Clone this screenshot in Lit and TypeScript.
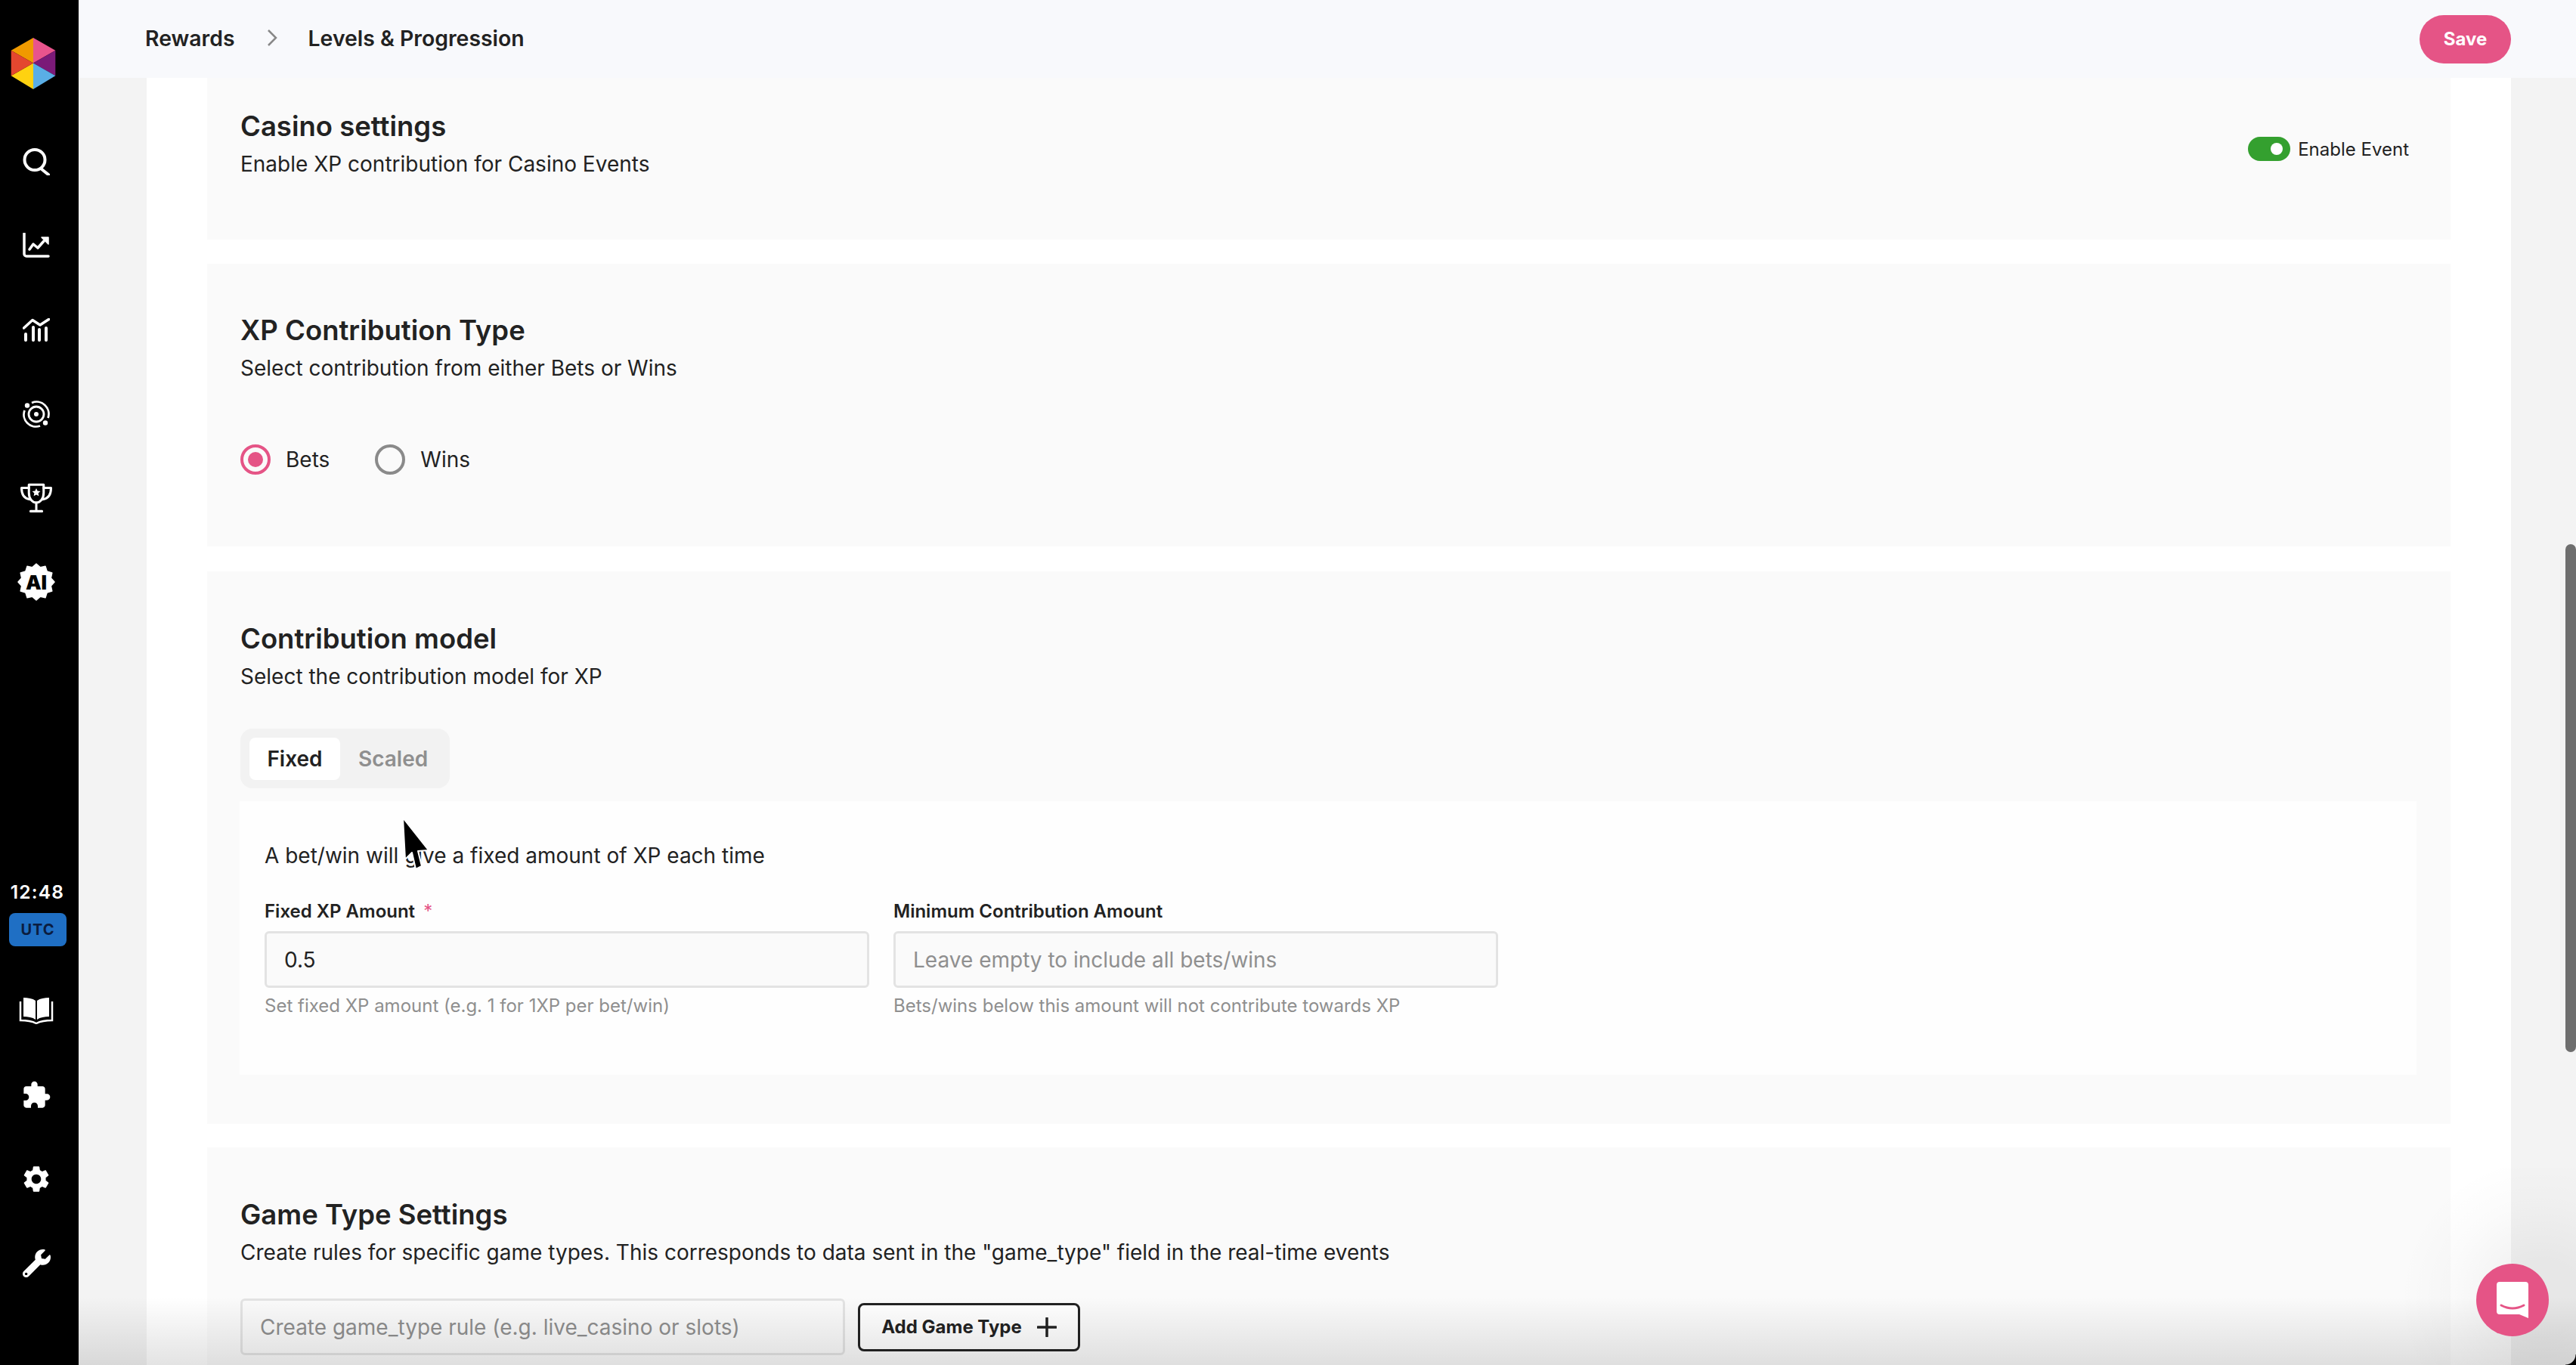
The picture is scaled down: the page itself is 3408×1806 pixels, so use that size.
import { LitElement, html, css, svg } from "lit";
import { customElement } from "lit/decorators.js";

const badge = (() => {
  const pts: string[] = [];
  const n = 12;
  for (let i = 0; i < n * 2; i++) {
    const r = i % 2 === 0 ? 24 : 20;
    const a = (Math.PI * i) / n - Math.PI / 2;
    pts.push(`${(25 + r * Math.cos(a)).toFixed(2)},${(25 + r * Math.sin(a)).toFixed(2)}`);
  }
  return pts.join(" ");
})();

const logo = svg`<svg width="60" height="68" viewBox="0 0 56 65">
  <polygon points="28,32 28,0 0,16" fill="#f09a00"/>
  <polygon points="28,32 28,0 56,16" fill="#e8548d"/>
  <polygon points="28,32 56,16 56,48" fill="#7b1a78"/>
  <polygon points="28,32 56,48 28,65" fill="#5aaee6"/>
  <polygon points="28,32 28,65 0,48" fill="#ffd210"/>
  <polygon points="28,32 0,48 0,16" fill="#e4472f"/>
</svg>`;

const icons = {
  search: svg`<svg width="36" height="36" viewBox="0 0 36 36" fill="none" stroke="#fff" stroke-width="4" stroke-linecap="round"><circle cx="16" cy="15.5" r="13.5"/><path d="M24 27l10 8"/></svg>`,
  area: svg`<svg width="36" height="33" viewBox="0 0 36 33" fill="none" stroke="#fff" stroke-linecap="round" stroke-linejoin="round"><path d="M2 1V28a3 3 0 0 0 3 3H34" stroke-width="3.5"/><path d="M9 22l5-7 6 5 8-9" stroke-width="3.5"/><path d="M25 6h9v9z" fill="#fff" stroke-width="1.5"/></svg>`,
  line: svg`<svg width="36" height="31" viewBox="0 0 36 31" fill="none" stroke="#fff" stroke-linecap="round" stroke-linejoin="round"><path d="M1.5 13L13 2.500l10 6.500L34.500 1.500" stroke-width="3.500"/><path d="M4 21V29M14 12V29M22 15V29M31 13V29" stroke-width="4"/></svg>`,
  target: svg`<svg width="36" height="36" viewBox="0 0 36 36" fill="none" stroke="#fff"><path d="M12 3A16 16 0 0 1 33.500 23M23 33.500A16 16 0 0 1 2.500 13" stroke-width="2.800"/><circle cx="18" cy="18" r="10" stroke-width="2.800"/><circle cx="18" cy="18" r="3" fill="#fff" stroke="none"/><circle cx="6" cy="6.500" r="3.200" fill="#fff" stroke="none"/><circle cx="30" cy="29.500" r="3.200" fill="#fff" stroke="none"/></svg>`,
  trophy: svg`<svg width="44" height="39" viewBox="0 0 40 36" fill="none" stroke="#fff" stroke-width="2.800" stroke-linecap="round" stroke-linejoin="round"><path d="M11 2H29V12C29 19 25 24 20 24S11 19 11 12z"/><path d="M11 6H2C2 14 5 19 12 20M29 6H38C38 14 35 19 28 20"/><path d="M20 24V33M13 34.500H27"/><path d="M20 6.500l1.500 3.200 3.500.4-2.600 2.400.7 3.500-3.100-1.800-3.100 1.800.7-3.500-2.600-2.400 3.500-.4z" fill="#fff" stroke="none"/></svg>`,
  ai: svg`<svg width="50" height="50" viewBox="0 0 50 50"><polygon points="${badge}" fill="#fff" stroke="#fff" stroke-width="1.500" stroke-linejoin="round"/><text x="25" y="34.500" text-anchor="middle" font-family="Inter" font-weight="900" font-size="26" fill="#000">AI</text></svg>`,
  book: svg`<svg width="46" height="36" viewBox="0 0 46 36"><path d="M6 1C12 1 18 2 22 5V30C18 27 12 26 6 26z" fill="#fff"/><path d="M24 5C28 2 34 1 40 1V26C34 26 28 27 24 30z" fill="#fff"/><path d="M2 6V31C10 31 17 32 23 35C29 32 36 31 44 31V6" fill="none" stroke="#fff" stroke-width="2.500"/></svg>`,
  puzzle: svg`<svg width="40" height="40" viewBox="0 0 24 24" fill="#fff"><path d="M20.500 11H19V7c0-1.100-.9-2-2-2h-4V3.500C13 2.120 11.880 1 10.500 1S8 2.120 8 3.500V5H4c-1.100 0-1.990.9-1.990 2v3.800H3.500c1.490 0 2.700 1.210 2.700 2.700s-1.210 2.700-2.700 2.700H2V20c0 1.100.9 2 2 2h3.800v-1.500c0-1.490 1.210-2.700 2.700-2.700 1.490 0 2.700 1.210 2.700 2.700V22H17c1.100 0 2-.9 2-2v-4h1.500c1.380 0 2.500-1.120 2.500-2.500S21.880 11 20.500 11z"/></svg>`,
  gear: svg`<svg width="42" height="42" viewBox="0 0 24 24" fill="#fff"><path d="M19.140 12.940c.04-.3.06-.61.06-.94 0-.32-.02-.64-.07-.94l2.030-1.580c.18-.14.23-.41.12-.61l-1.920-3.320c-.12-.22-.37-.29-.59-.22l-2.390.96c-.5-.38-1.030-.7-1.620-.94l-.36-2.540c-.04-.24-.24-.41-.48-.41h-3.840c-.24 0-.43.17-.47.41l-.36 2.540c-.59.24-1.130.57-1.620.94l-2.390-.96c-.22-.08-.47 0-.59.22L2.740 8.870c-.12.21-.08.47.12.61l2.030 1.580c-.05.3-.09.63-.09.94s.02.64.07.94l-2.030 1.580c-.18.14-.23.41-.12.61l1.920 3.320c.12.22.37.29.59.22l2.390-.96c.5.38 1.030.7 1.620.94l.36 2.54c.05.24.24.41.48.41h3.840c.24 0 .44-.17.47-.41l.36-2.540c.59-.24 1.130-.56 1.620-.94l2.390.96c.22.08.47 0 .59-.22l1.920-3.320c.12-.22.07-.47-.12-.61l-2.010-1.580zM12 15.600c-1.980 0-3.600-1.620-3.600-3.600s1.620-3.600 3.600-3.600 3.600 1.620 3.600 3.600-1.620 3.600-3.600 3.600z"/></svg>`,
  wrench: svg`<svg width="37" height="37" viewBox="0 0 512 512" fill="#fff"><path d="M507.730 109.100c-2.240-9.030-13.540-12.090-20.120-5.510l-74.360 74.360-67.880-11.310-11.310-67.880 74.360-74.360c6.620-6.620 3.430-17.900-5.660-20.160-47.380-11.740-99.550.91-136.580 37.930-39.640 39.640-50.550 97.100-34.050 147.200L18.740 402.760c-24.990 24.990-24.990 65.510 0 90.500 24.990 24.990 65.510 24.990 90.500 0l213.210-213.210c50.120 16.710 107.470 5.680 147.370-34.220 37.070-37.070 49.700-89.320 37.910-136.730zM64 472c-13.250 0-24-10.750-24-24 0-13.260 10.750-24 24-24s24 10.740 24 24c0 13.250-10.750 24-24 24z"/></svg>`,
};

@customElement("app-root")
export class AppRoot extends LitElement {
  static styles = css`
    :host {
      display: block;
      position: relative;
      width: 3408px;
      height: 1806px;
      overflow: hidden;
      font-family: Inter, "Noto Sans", sans-serif;
      color: #222;
      background: #f3f3f3;
    }
    * { box-sizing: border-box; }
    .app { display: grid; grid-template-columns: 104px 1fr; height: 100%; }

    .rail {
      background: #000;
      display: flex;
      flex-direction: column;
      align-items: center;
      padding: 50px 8px 0 0;
      color: #fff;
    }
    .logo { display: flex; margin: 0 9px 0 0; height: 68px; }
    .logo-gap { height: 40px; flex: none; }
    .slot { height: 111.300px; width: 100%; flex: none; display: flex; align-items: center; justify-content: center; }
    .clock { margin: 338px 0 0 3px; font-size: 24.500px; line-height: 32px; font-weight: 600; letter-spacing: 1.200px; }
    .tz {
      margin: 12px 0 30px 4px;
      width: 76px;
      height: 44px;
      border-radius: 8px;
      background: #1f6fc4;
      color: #0b1d40;
      font-size: 20px;
      font-weight: 700;
      letter-spacing: 1px;
      display: flex;
      align-items: center;
      justify-content: center;
    }

    .main { display: flex; flex-direction: column; min-width: 0; }
    .top {
      height: 103px;
      flex: none;
      background: #f8f9fc;
      display: flex;
      align-items: center;
      padding: 0 86px 3px 88px;
      font-size: 28.400px;
      font-weight: 600;
    }
    .top svg { margin: 0 41px 0 42px; }
    .save {
      margin: 3px 0 0 auto;
      width: 121px;
      height: 64px;
      border: 0;
      border-radius: 32px;
      background: #e55486;
      color: #fff;
      font: 700 24px Inter, sans-serif;
    }

    .scroll { flex: 1; padding: 0 86px 0 90px; min-height: 0; }
    .panel { background: #fff; height: 100%; padding: 0 80px; }
    .card { background: #fafafa; padding-left: 44px; padding-right: 45px; margin-bottom: 31px; }
    .casino { height: 214px; padding-top: 43px; position: relative; margin-bottom: 32px; display: flex; justify-content: space-between; }
    .xp { height: 374px; padding-top: 67px; margin-bottom: 33px; }
    .model { height: 731px; padding-top: 68px; }
    .game { padding-top: 68px; height: 300px; }

    h2 { margin: 0 0 9px; font-size: 36.500px; line-height: 42px; font-weight: 600; color: #222; }
    .desc { margin: 0; font-size: 28px; line-height: 40px; font-weight: 400; color: #222; }

    .toggle-wrap { display: flex; align-items: center; gap: 10px; font-size: 24px; height: 32px; margin: 35px 10px 0 0; }
    .toggle {
      width: 56px;
      height: 32px;
      border-radius: 16px;
      background: #34a02f;
      display: flex;
      align-items: center;
      justify-content: flex-end;
      padding-right: 10px;
    }
    .toggle i { width: 16px; height: 16px; border-radius: 50%; background: #fff; }

    .radios { display: flex; margin: 81px 0 0; gap: 60px; font-size: 28px; }
    .radio { display: flex; align-items: center; gap: 20px; height: 40px; }
    .dot { width: 40px; height: 40px; border-radius: 50%; border: 4.500px solid #8a8a8a; display: flex; align-items: center; justify-content: center; }
    .dot.on { border-color: #e55486; }
    .dot.on i { width: 20px; height: 20px; border-radius: 50%; background: #e55486; }

    .tabs {
      margin: 49px 0 17px;
      width: 277px;
      height: 79px;
      border-radius: 16px;
      background: #f2f2f2;
      padding: 12px;
      display: flex;
      font-size: 28px;
      font-weight: 600;
      color: #8f8f8f;
    }
    .tab { display: flex; align-items: center; justify-content: center; height: 56px; }
    .tab.on { width: 120px; background: #fff; border-radius: 8px; color: #222; }
    .tab.off { margin-left: 24px; }

    .inner { background: #fefefe; height: 362px; margin-left: -1px; padding: 52px 0 0 33px; }
    .fields { display: grid; grid-template-columns: 800px 800px; column-gap: 32px; margin-top: 39px; }
    label { display: block; font-size: 24px; line-height: 30px; font-weight: 600; margin-bottom: 11px; }
    label b { color: #e55486; font-weight: 400; margin-left: 5px; }
    input {
      display: block;
      width: 100%;
      height: 75px;
      border: 3px solid #e3e3e3;
      border-radius: 6px;
      background: #fafafa;
      padding: 0 23px;
      font: 400 28px Inter, sans-serif;
      color: #222;
      outline: none;
    }
    input::placeholder { color: #8f8f8f; opacity: 1; }
    .hint { margin: 9px 0 0; font-size: 24px; line-height: 30px; color: #8f8f8f; }

    .add { display: flex; align-items: center; gap: 17px; margin-top: 41px; }
    .add input { width: 800px; flex: none; }
    .btn {
      width: 294px;
      height: 64px;
      flex: none;
      border: 3px solid #222;
      border-radius: 8px;
      background: #fff;
      display: flex;
      align-items: center;
      justify-content: center;
      gap: 20px;
      font: 700 24px Inter, sans-serif;
      color: #222;
      padding: 0;
    }

    .bar { position: absolute; right: 0; top: 720px; width: 14px; height: 672px; border-radius: 7px; background: #6e6e6e; }
    .cursor { position: absolute; left: 530px; top: 1080px; }
    .fade {
      position: absolute;
      left: 104px;
      right: 0;
      bottom: 0;
      height: 90px;
      background: linear-gradient(to bottom, rgba(0,0,0,0), rgba(0,0,0,.11));
      pointer-events: none;
    }
    .halo {
      position: absolute;
      right: 0;
      bottom: 0;
      width: 260px;
      height: 260px;
      background: radial-gradient(circle at 216px 174px, rgba(0,0,0,.05) 50px, rgba(0,0,0,.015) 130px, rgba(0,0,0,0) 190px);
      pointer-events: none;
    }
    .chat {
      position: absolute;
      left: 3276px;
      top: 1672px;
      width: 96px;
      height: 96px;
      border-radius: 50%;
      background: #e55486;
      display: flex;
      align-items: center;
      justify-content: center;
    }
    .corner {
      position: absolute;
      right: 0;
      bottom: 0;
      width: 14px;
      height: 14px;
      background: radial-gradient(circle at 0 0, transparent 13px, #000 14px);
    }
  `;

  render() {
    return html`
      <div class="app">
        <nav class="rail">
          <div class="logo">${logo}</div>
          <div class="logo-gap"></div>
          <div class="slot">${icons.search}</div>
          <div class="slot">${icons.area}</div>
          <div class="slot">${icons.line}</div>
          <div class="slot">${icons.target}</div>
          <div class="slot">${icons.trophy}</div>
          <div class="slot">${icons.ai}</div>
          <div class="clock">12:48</div>
          <div class="tz">UTC</div>
          <div class="slot">${icons.book}</div>
          <div class="slot">${icons.puzzle}</div>
          <div class="slot">${icons.gear}</div>
          <div class="slot">${icons.wrench}</div>
        </nav>
        <div class="main">
          <header class="top">
            <span>Rewards</span>
            <svg width="14" height="22" viewBox="0 0 14 22" fill="none" stroke="#888" stroke-width="2.500"><path d="M2 1l10 10L2 21"/></svg>
            <span>Levels &amp; Progression</span>
            <button class="save">Save</button>
          </header>
          <div class="scroll">
            <div class="panel">
              <section class="card casino">
                <div>
                  <h2>Casino settings</h2>
                  <p class="desc">Enable XP contribution for Casino Events</p>
                </div>
                <div class="toggle-wrap"><div class="toggle"><i></i></div><span>Enable Event</span></div>
              </section>
              <section class="card xp">
                <h2>XP Contribution Type</h2>
                <p class="desc">Select contribution from either Bets or Wins</p>
                <div class="radios">
                  <div class="radio"><span class="dot on"><i></i></span>Bets</div>
                  <div class="radio"><span class="dot"></span>Wins</div>
                </div>
              </section>
              <section class="card model">
                <h2>Contribution model</h2>
                <p class="desc">Select the contribution model for XP</p>
                <div class="tabs">
                  <div class="tab on">Fixed</div>
                  <div class="tab off">Scaled</div>
                </div>
                <div class="inner">
                  <p class="desc">A bet/win will give a fixed amount of XP each time</p>
                  <div class="fields">
                    <div>
                      <label>Fixed XP Amount <b>*</b></label>
                      <input .value=${"0.5"} />
                      <p class="hint">Set fixed XP amount (e.g. 1 for 1XP per bet/win)</p>
                    </div>
                    <div>
                      <label>Minimum Contribution Amount</label>
                      <input placeholder="Leave empty to include all bets/wins" />
                      <p class="hint">Bets/wins below this amount will not contribute towards XP</p>
                    </div>
                  </div>
                </div>
              </section>
              <section class="card game">
                <h2>Game Type Settings</h2>
                <p class="desc">Create rules for specific game types. This corresponds to data sent in the "game_type" field in the real-time events</p>
                <div class="add">
                  <input placeholder="Create game_type rule (e.g. live_casino or slots)" />
                  <button class="btn">Add Game Type
                    <svg width="26" height="26" viewBox="0 0 26 26" stroke="#222" stroke-width="3.500" stroke-linecap="round"><path d="M13 1V25M1 13H25"/></svg>
                  </button>
                </div>
              </section>
            </div>
          </div>
        </div>
      </div>
      <div class="bar"></div>
      <svg class="cursor" width="42" height="76" viewBox="0 0 42 76">
        <polygon points="3,2 6,57 15,48 20,70 28,66 23,46 37,45" fill="#000" stroke="#fff" stroke-width="2" stroke-linejoin="round"/>
      </svg>
      <div class="fade"></div>
      <div class="halo"></div>
      <div class="chat">
        <svg width="42" height="48" viewBox="0 0 42 48"><path d="M4 0H38a4 4 0 0 1 4 4V48L30 43H4a4 4 0 0 1-4-4V4a4 4 0 0 1 4-4z" fill="#fff"/><path d="M6 31Q21 39 36 31" fill="none" stroke="#e55486" stroke-width="3" stroke-linecap="round"/></svg>
      </div>
      <div class="corner"></div>
    `;
  }
}
